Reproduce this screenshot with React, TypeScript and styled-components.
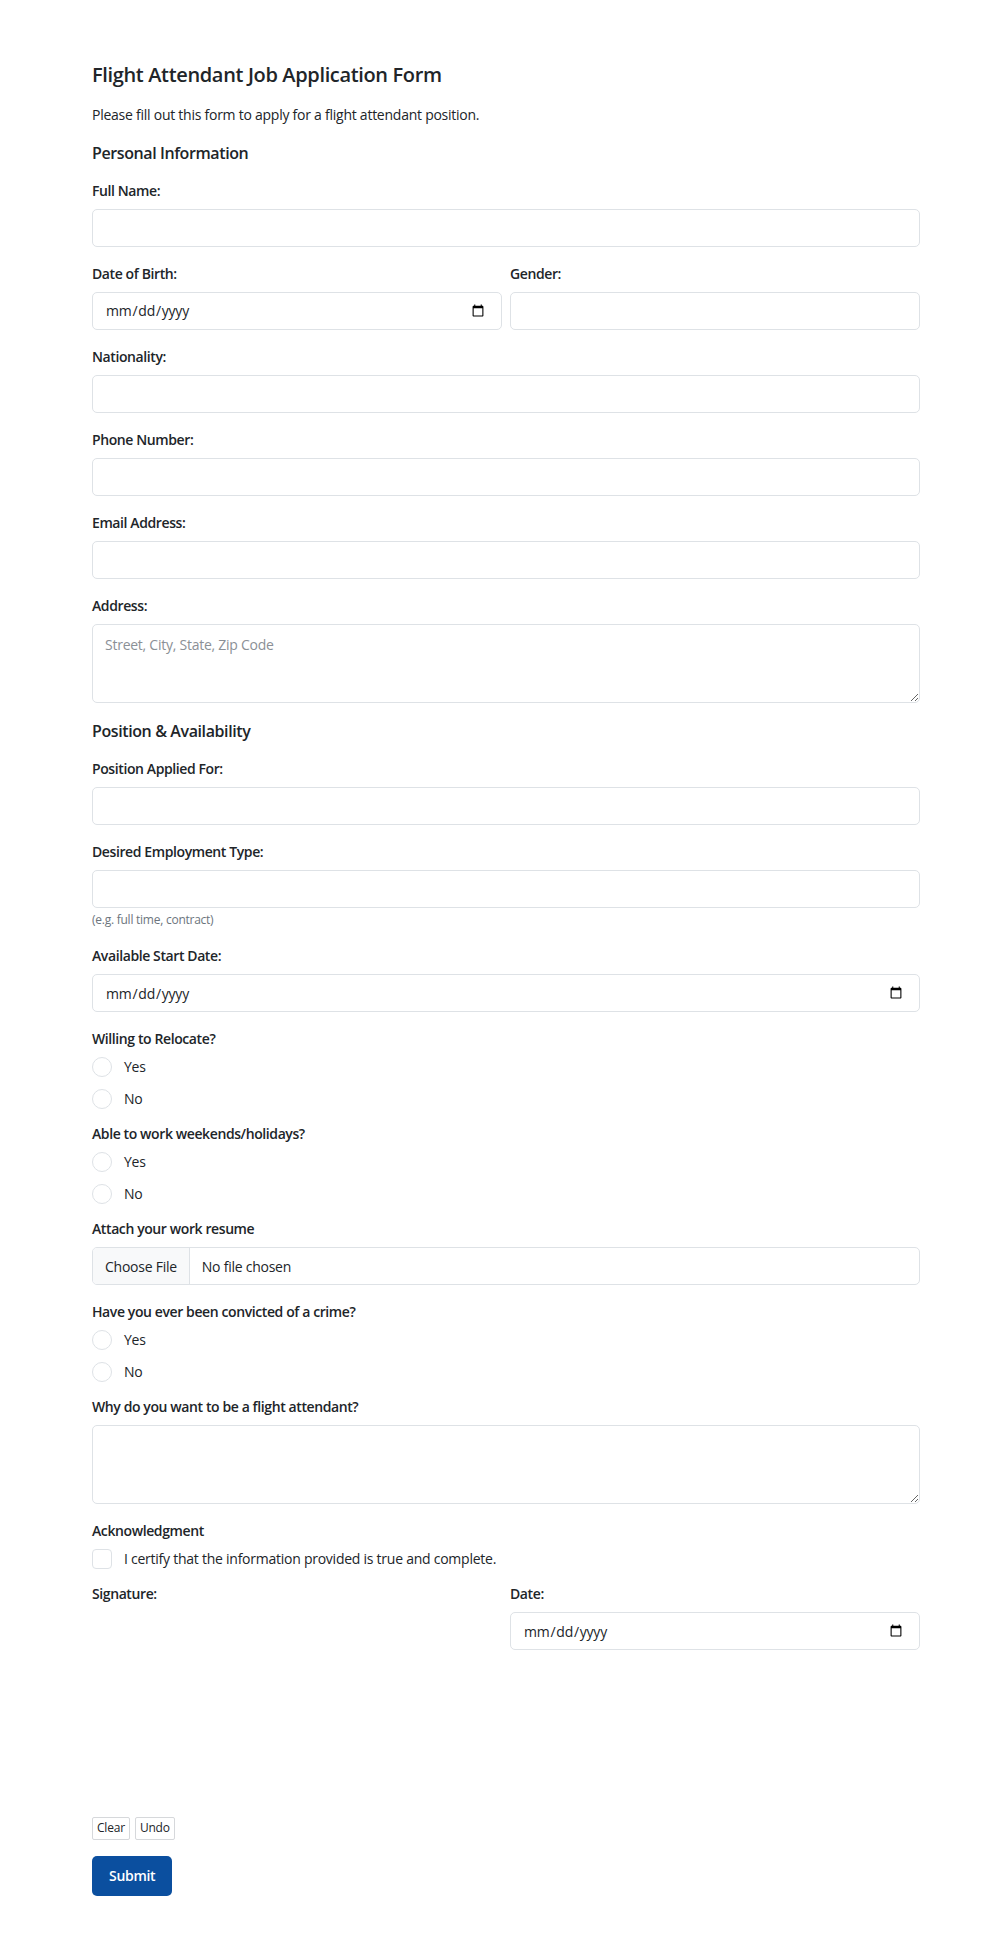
import React from 'react';
import styled, { createGlobalStyle } from 'styled-components';

const GlobalStyle = createGlobalStyle`
  *, *::before, *::after {
    box-sizing: border-box;
  }

  body {
    margin: 0;
    background: #ffffff;
    color: #212529;
    font-family: 'Open Sans', 'Noto Sans', sans-serif;
    font-size: 14px;
    line-height: 1.5;
    letter-spacing: -0.25px;
  }
`;

const Page = styled.main`
  padding: 62px 64px 53px 92px;
`;

const Form = styled.form`
  display: flex;
  flex-direction: column;
`;

const Title = styled.h1`
  margin: 0;
  font-size: 20px;
  font-weight: 600;
  line-height: 25px;
  letter-spacing: -0.35px;
`;

const Intro = styled.p`
  margin: 17px 0 15px;
  line-height: 21px;
`;

const SectionTitle = styled.h2`
  margin: 3.5px 0 17px;
  font-size: 16px;
  font-weight: 600;
  line-height: 1.2;
  letter-spacing: -0.4px;
`;

const Field = styled.div<{ $gap?: number }>`
  margin-bottom: ${({ $gap }) => $gap ?? 16}px;
  min-width: 0;
`;

const Label = styled.label`
  display: block;
  margin-bottom: 8px;
  font-weight: 600;
  line-height: 21px;
  letter-spacing: -0.4px;
`;

const Question = styled.div`
  margin-bottom: 5.5px;
  font-weight: 600;
  line-height: 21px;
  letter-spacing: -0.4px;
`;

const Row = styled.div`
  display: grid;
  grid-template-columns: 1fr 1fr;
  column-gap: 8px;
`;

const Input = styled.input`
  display: block;
  width: 100%;
  height: 38px;
  padding: 0 12px;
  border: 1px solid #dee2e6;
  border-radius: 5px;
  background: #ffffff;
  color: #212529;
  font: inherit;
  letter-spacing: inherit;
  line-height: 21px;

  &::-webkit-calendar-picker-indicator {
    margin-right: 2px;
  }
`;

const FileInput = styled(Input)`
  padding: 7.5px 12px;
  overflow: hidden;

  &::file-selector-button {
    margin: -7.5px 12px -7.5px -12px;
    padding: 7.5px 12px;
    border: 0;
    border-right: 1px solid #dee2e6;
    border-radius: 0;
    background: #f8f9fa;
    color: #212529;
    font: inherit;
    letter-spacing: inherit;
  }
`;

const TextArea = styled.textarea`
  display: block;
  width: 100%;
  height: 79px;
  padding: 9px 12px;
  border: 1px solid #dee2e6;
  border-radius: 5px;
  color: #212529;
  font: inherit;
  letter-spacing: inherit;
  line-height: 21px;
  resize: vertical;

  &::placeholder {
    color: #8b9096;
  }
`;

const Hint = styled.div`
  margin-top: 3px;
  color: #6c757d;
  font-size: 12px;
  line-height: 18px;
`;

const Options = styled.div`
  display: flex;
  flex-direction: column;
  gap: 8px;
`;

const Option = styled.label`
  display: flex;
  align-items: center;
  gap: 12px;
  height: 24px;
`;

const Radio = styled.input`
  appearance: none;
  flex: none;
  width: 20px;
  height: 20px;
  margin: 0;
  border: 1px solid #dee2e6;
  border-radius: 50%;
  background: #ffffff;
`;

const Checkbox = styled(Radio)`
  border-radius: 4px;
`;

const SignaturePad = styled.canvas`
  display: block;
  width: 100%;
  height: 196px;
`;

const PadActions = styled.div`
  display: flex;
  gap: 5px;
  margin-top: 8.5px;
`;

const SmallButton = styled.button`
  height: 23px;
  padding: 0 4px;
  border: 1px solid #d6d8db;
  border-radius: 2px;
  background: #ffffff;
  color: #212529;
  font: inherit;
  font-size: 12px;
  letter-spacing: -0.2px;
  line-height: 1;
`;

const SubmitButton = styled.button`
  align-self: flex-start;
  height: 40px;
  margin-top: 16px;
  padding: 0 17px;
  border: 0;
  border-radius: 5px;
  background: #0b4f9f;
  color: #ffffff;
  font: inherit;
  font-weight: 600;
  letter-spacing: -0.3px;
`;

const ChoiceGroup = ({ question, name }: { question: string; name: string }) => (
  <Field $gap={12.5}>
    <Question>{question}</Question>
    <Options>
      <Option>
        <Radio type="radio" name={name} value="yes" />
        Yes
      </Option>
      <Option>
        <Radio type="radio" name={name} value="no" />
        No
      </Option>
    </Options>
  </Field>
);

export default function App() {
  return (
    <>
      <GlobalStyle />
      <Page>
        <Form onSubmit={(e) => e.preventDefault()}>
          <Title>Flight Attendant Job Application Form</Title>
          <Intro>Please fill out this form to apply for a flight attendant position.</Intro>

          <SectionTitle>Personal Information</SectionTitle>
          <Field>
            <Label htmlFor="fullName">Full Name:</Label>
            <Input id="fullName" type="text" />
          </Field>
          <Row>
            <Field>
              <Label htmlFor="dob">Date of Birth:</Label>
              <Input id="dob" type="date" />
            </Field>
            <Field>
              <Label htmlFor="gender">Gender:</Label>
              <Input id="gender" type="text" />
            </Field>
          </Row>
          <Field>
            <Label htmlFor="nationality">Nationality:</Label>
            <Input id="nationality" type="text" />
          </Field>
          <Field>
            <Label htmlFor="phone">Phone Number:</Label>
            <Input id="phone" type="tel" />
          </Field>
          <Field>
            <Label htmlFor="email">Email Address:</Label>
            <Input id="email" type="email" />
          </Field>
          <Field>
            <Label htmlFor="address">Address:</Label>
            <TextArea id="address" placeholder="Street, City, State, Zip Code" />
          </Field>

          <SectionTitle>Position &amp; Availability</SectionTitle>
          <Field>
            <Label htmlFor="position">Position Applied For:</Label>
            <Input id="position" type="text" />
          </Field>
          <Field>
            <Label htmlFor="employment">Desired Employment Type:</Label>
            <Input id="employment" type="text" />
            <Hint>(e.g. full time, contract)</Hint>
          </Field>
          <Field>
            <Label htmlFor="startDate">Available Start Date:</Label>
            <Input id="startDate" type="date" />
          </Field>
          <ChoiceGroup question="Willing to Relocate?" name="relocate" />
          <ChoiceGroup question="Able to work weekends/holidays?" name="weekends" />
          <Field>
            <Label htmlFor="resume">Attach your work resume</Label>
            <FileInput id="resume" type="file" />
          </Field>
          <ChoiceGroup question="Have you ever been convicted of a crime?" name="crime" />
          <Field>
            <Label htmlFor="why">Why do you want to be a flight attendant?</Label>
            <TextArea id="why" />
          </Field>

          <Field $gap={12.5}>
            <Question>Acknowledgment</Question>
            <Option>
              <Checkbox type="checkbox" />
              I certify that the information provided is true and complete.
            </Option>
          </Field>
          <Row>
            <div>
              <Label>Signature:</Label>
              <SignaturePad />
              <PadActions>
                <SmallButton type="button">Clear</SmallButton>
                <SmallButton type="button">Undo</SmallButton>
              </PadActions>
            </div>
            <div>
              <Label htmlFor="signDate">Date:</Label>
              <Input id="signDate" type="date" />
            </div>
          </Row>
          <SubmitButton type="submit">Submit</SubmitButton>
        </Form>
      </Page>
    </>
  );
}
